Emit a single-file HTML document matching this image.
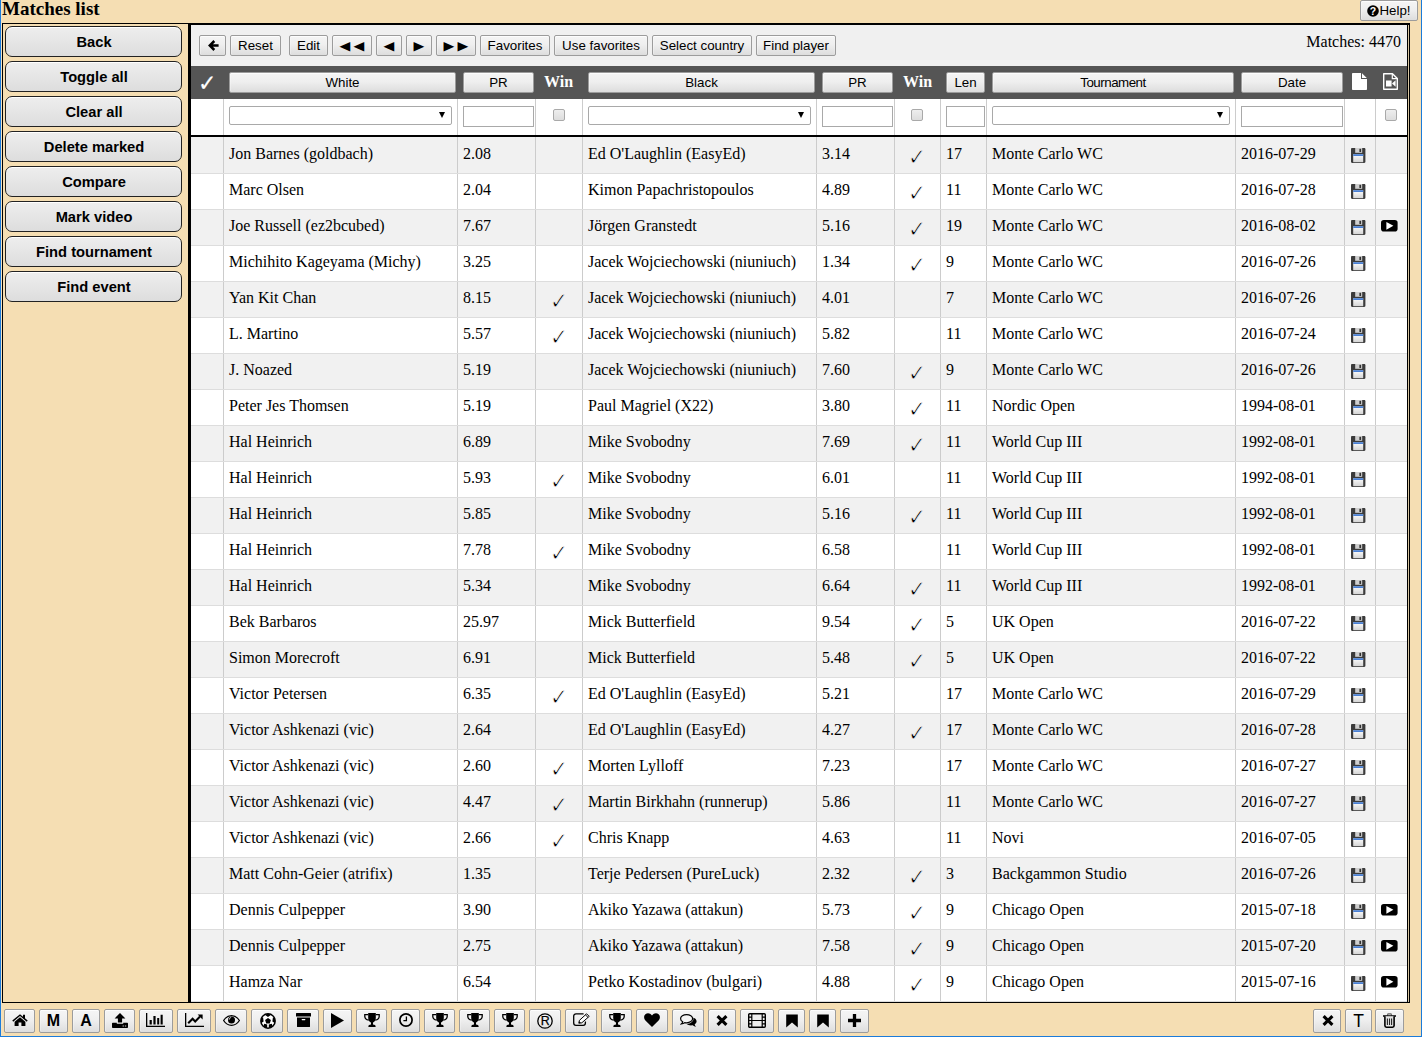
<!DOCTYPE html><html><head><meta charset="utf-8"><title>Matches list</title><style>
html,body{margin:0;padding:0;}
body{width:1422px;height:1037px;overflow:hidden;background:#f5deb3;position:relative;font-family:"Liberation Serif",serif;font-size:16px;color:#000;}
#bl{position:absolute;left:0;top:0;width:1px;height:1037px;background:#1c7bd9;border-right:1px solid #f3e2c2;}
#bb{position:absolute;left:0;top:1036px;width:1422px;height:1px;background:#1c7bd9;}
#br{position:absolute;left:1421px;top:0;width:1px;height:1037px;background:#1c7bd9;}
#title{position:absolute;left:2px;top:-2px;font-weight:bold;font-size:19px;line-height:22px;white-space:nowrap;}
button{font-family:"Liberation Sans",sans-serif;font-size:13.333px;color:#000;margin:0;padding:0;box-sizing:border-box;white-space:nowrap;}
.b{position:absolute;border:1px solid #9c9c9c;border-radius:2px;background:linear-gradient(#f5f5f5,#efefef 45%,#dddddd);box-shadow:inset 0 1px 0 rgba(255,255,255,.8),inset 1px 0 0 rgba(255,255,255,.3),inset -1px 0 0 rgba(255,255,255,.15);text-align:center;}
#help{position:absolute;left:1360px;top:0px;width:58px;height:21px;border:1px solid #9c9c9c;border-radius:2px;background:linear-gradient(#f5f5f5,#efefef 45%,#dddddd);box-shadow:inset 0 1px 0 rgba(255,255,255,.8),inset 1px 0 0 rgba(255,255,255,.3),inset -1px 0 0 rgba(255,255,255,.15);font-size:13.333px;line-height:17px;text-align:center;}
#help svg{width:12px;height:12px;vertical-align:-1.5px;}
#left{position:absolute;left:2px;top:23px;width:185px;height:978px;border:1px solid #000;}
.lb{position:absolute;left:2px;width:177px;height:31px;border:1px solid #222;border-radius:7px;background:linear-gradient(#eeeeee,#dddddd);font-weight:bold;font-size:14.7px;line-height:29px;padding-top:1px;padding-left:1px;box-shadow:inset 0 1px 0 #fff;}
#main{position:absolute;left:189px;top:23px;width:1219px;height:977px;border-left:2px solid #000;border-top:2px solid #000;border-bottom:1px solid #000;background:#fff;overflow:hidden;}
#mr1,#mr2,#mr3{position:absolute;top:0;width:1px;height:977px;background:#000;z-index:5}
#mr1{left:1216px}#mr2{left:1217px;background:#d9c7a3}#mr3{left:1218px}
#tb{position:absolute;left:0;top:0;width:1216px;height:41px;background:#f0f0f0;}
.tbb{top:10px;height:21px;line-height:18px;}
.tri{font-family:"DejaVu Sans",sans-serif;font-size:14px;line-height:17px;}
.tri span{display:inline-block;transform:scaleY(.9);width:14px;text-align:center}
#mc{position:absolute;right:6px;top:7px;line-height:20px;}
#hd{position:absolute;left:0;top:41px;width:1216px;height:33px;background:#555;}
.hb{top:6px;height:21px;line-height:18px;}
.hchk{position:absolute;left:7.3px;top:6.2px;color:#fff;font-family:"DejaVu Sans",sans-serif;font-size:23px;line-height:22px;-webkit-text-stroke:0.15px #fff;transform:scaleX(.96);transform-origin:0 0}
.win{position:absolute;top:6px;color:#fff;font-weight:bold;font-size:16px;line-height:20px;}
.hi{position:absolute;top:7px;line-height:0}
#fr{position:absolute;left:0;top:74px;width:1216px;height:36px;background:#fff;}
#sep{position:absolute;left:0;top:110px;width:1216px;height:2px;background:#000;}
.cell{position:absolute;top:0;height:100%;box-sizing:border-box;border-right:1px solid #ccc;padding:0 0 0 5px;white-space:nowrap;overflow:hidden;}
.c11{border-right:none;}
.row{position:relative;height:35px;border-bottom:1px solid #ddd;line-height:32px;background:#fff;top:112px;}
.row.odd{background:#f1f1f1;}
.row.first{height:36px;}
.row.first .cell{padding-top:1px}
.ctr{text-align:center;padding:0;}
.ck{font-family:"DejaVu Sans",sans-serif;font-size:24px;line-height:20px;position:relative;top:5.5px;display:inline-block;transform:scaleX(.92);-webkit-text-stroke:0.9px #fff;}
.odd .ck{-webkit-text-stroke-color:#f1f1f1;}
.ic{padding:0;text-align:center;}
.ic svg{position:absolute;}
.c10 svg{left:6px;bottom:10px}
.c11 svg{left:5px;bottom:13.4px}
.sel{position:absolute;top:7px;height:19px;box-sizing:border-box;border:1px solid #a9a9a9;background:#fff;border-radius:2px}
.sel i{position:absolute;right:6px;top:5px;width:0;height:0;border-left:3.5px solid transparent;border-right:3.5px solid transparent;border-top:6px solid #000;}
.sel select{-webkit-appearance:none;appearance:none;position:absolute;left:0;top:0;width:100%;height:100%;border:0;margin:0;padding:0;background:transparent;outline:none;font:13.333px "Liberation Sans",sans-serif}
input{-webkit-appearance:none;appearance:none;margin:0;padding:0;outline:none;font:13.333px "Liberation Sans",sans-serif}
.inp{position:absolute;top:7px;height:21px;box-sizing:border-box;border:1px solid #a9a9a9;background:#fff;}
.cb{position:absolute;top:10px;width:12px;height:12px;box-sizing:border-box;border:1px solid #a9a9a9;border-radius:2px;background:linear-gradient(#eee,#ddd);}
#bot{position:absolute;left:0;top:1009px;width:1422px;height:24px;}
.bb{top:0;height:24px;line-height:20px;font-size:17px;}
.bb svg{position:absolute;}
.bb b{font-size:16px;line-height:19px;display:block;position:relative;top:-1px}
.tt{font-size:17.5px;line-height:20px;display:block}

.c0{left:0px;width:33px;}
.c1{left:33px;width:234px;}
.c2{left:267px;width:78px;}
.c3{left:345px;width:47px;}
.c4{left:392px;width:234px;}
.c5{left:626px;width:78px;}
.c6{left:704px;width:46px;}
.c7{left:750px;width:46px;}
.c8{left:796px;width:249px;}
.c9{left:1045px;width:109px;}
.c10{left:1154px;width:31px;}
.c11{left:1185px;width:31px;}
</style></head><body>
<svg width="0" height="0" style="position:absolute"><defs><linearGradient id="lg" x1="0" y1="0" x2="0" y2="1"><stop offset="0" stop-color="#fff"/><stop offset="1" stop-color="#d4d4d4"/></linearGradient></defs></svg>
<div id="bl"></div><div id="bb"></div><div id="br"></div>
<div id="title">Matches list</div>
<button id="help"><svg width="12" height="12" viewBox="0 0 12 12" ><circle cx="6" cy="6" r="5.8" fill="#000"/><text x="6" y="9.8" font-family="Liberation Sans" font-weight="bold" font-size="10.5" fill="#fff" text-anchor="middle">?</text></svg><span>Help!</span></button>
<div id="left">
<button class="lb" style="top:2px">Back</button>
<button class="lb" style="top:37px">Toggle all</button>
<button class="lb" style="top:72px">Clear all</button>
<button class="lb" style="top:107px">Delete marked</button>
<button class="lb" style="top:142px">Compare</button>
<button class="lb" style="top:177px">Mark video</button>
<button class="lb" style="top:212px">Find tournament</button>
<button class="lb" style="top:247px">Find event</button>
</div>
<div id="main"><div id="mr1"></div><div id="mr2"></div><div id="mr3"></div>
<div id="tb">
<button class="b tbb" style="left:8px;width:27px"><svg width="11" height="11" viewBox="0 0 11 11" style="position:absolute;left:7.5px;top:4px"><path d="M10.6 5.5H2.6M6.3 1L1.8 5.5L6.3 10" fill="none" stroke="#000" stroke-width="2.5" stroke-linecap="butt" stroke-linejoin="miter"/></svg></button>
<button class="b tbb" style="left:39px;width:51px">Reset</button>
<button class="b tbb" style="left:98px;width:39px">Edit</button>
<button class="b tbb tri" style="left:141px;width:40px"><span>◀</span><span>◀</span></button>
<button class="b tbb tri" style="left:185px;width:26px"><span>◀</span></button>
<button class="b tbb tri" style="left:215px;width:26px"><span>▶</span></button>
<button class="b tbb tri" style="left:245px;width:40px"><span>▶</span><span>▶</span></button>
<button class="b tbb" style="left:289px;width:70px">Favorites</button>
<button class="b tbb" style="left:363px;width:94px">Use favorites</button>
<button class="b tbb" style="left:461px;width:100px">Select country</button>
<button class="b tbb" style="left:565px;width:80px">Find player</button>
<div id="mc">Matches: 4470</div>
</div>
<div id="hd">
<span class="hchk">✓</span>
<button class="b hb" style="left:38px;width:227px">White</button>
<button class="b hb" style="left:272px;width:71px">PR</button>
<button class="b hb" style="left:397px;width:227px">Black</button>
<button class="b hb" style="left:631px;width:71px">PR</button>
<button class="b hb" style="left:755px;width:39px">Len</button>
<button class="b hb" style="left:801px;width:242px;letter-spacing:-0.5px">Tournament</button>
<button class="b hb" style="left:1050px;width:102px">Date</button>
<span class="win" style="left:353px">Win</span>
<span class="win" style="left:712px">Win</span>
<span class="hi" style="left:1161px"><svg width="15" height="17" viewBox="0 0 15 17" ><path d="M0.8 0H9V6H15V16.2C15 16.7 14.7 17 14.2 17H0.8C0.3 17 0 16.7 0 16.2V0.8C0 0.3 0.3 0 0.8 0Z M10 0.2L14.8 5H10Z" fill="#fff"/></svg></span>
<span class="hi" style="left:1192px"><svg width="15" height="17" viewBox="0 0 15 17" ><path d="M0.7 0.7H9.5L14.3 5.5V16.3H0.7Z" fill="none" stroke="#fff" stroke-width="1.4" stroke-linejoin="round"/><path d="M9.3 0.7V5.7H14.3" fill="none" stroke="#fff" stroke-width="1.2"/><path d="M3 7.5H8.6V13.5H3Z M9 10.5L12.6 7.3V13.7Z" fill="#fff"/></svg></span>
</div>
<div id="fr">
<div class="cell c0"></div>
<div class="cell c1"></div>
<div class="cell c2"></div>
<div class="cell c3"></div>
<div class="cell c4"></div>
<div class="cell c5"></div>
<div class="cell c6"></div>
<div class="cell c7"></div>
<div class="cell c8"></div>
<div class="cell c9"></div>
<div class="cell c10"></div>
<div class="cell c11"></div>
<div class="sel" style="left:38px;width:223px"><select><option></option></select><i></i></div>
<div class="sel" style="left:397px;width:223px"><select><option></option></select><i></i></div>
<div class="sel" style="left:801px;width:238px"><select><option></option></select><i></i></div>
<input type="text" class="inp" style="left:272px;width:71px">
<input type="text" class="inp" style="left:631px;width:71px">
<input type="text" class="inp" style="left:755px;width:39px">
<input type="text" class="inp" style="left:1050px;width:102px">
<input type="checkbox" class="cb" style="left:362px">
<input type="checkbox" class="cb" style="left:720px">
<input type="checkbox" class="cb" style="left:1194px">
</div><div id="sep"></div>
<div class="row odd first">
<div class="cell c0"></div>
<div class="cell c1">Jon Barnes (goldbach)</div>
<div class="cell c2">2.08</div>
<div class="cell c3 ctr"></div>
<div class="cell c4">Ed O'Laughlin (EasyEd)</div>
<div class="cell c5">3.14</div>
<div class="cell c6 ctr"><span class="ck">✓</span></div>
<div class="cell c7">17</div>
<div class="cell c8">Monte Carlo WC</div>
<div class="cell c9">2016-07-29</div>
<div class="cell c10 ic"><svg width="15" height="15" viewBox="0 0 15 15" ><path d="M1.2 0H13.2C13.9 0 14.4 0.5 14.4 1.2V13.8C14.4 14.5 13.9 15 13.2 15H1.2C0.5 15 0 14.5 0 13.8V1.2C0 0.5 0.5 0 1.2 0Z" fill="#3b3b3b"/><rect x="4.2" y="0" width="7" height="4.8" fill="#d0d0d0"/><rect x="8.4" y="0.8" width="1.7" height="3.2" fill="#333"/><rect x="2.2" y="6.2" width="10" height="8" fill="url(#lg)"/><rect x="2.2" y="6.2" width="10" height="1.8" fill="#4a80d4"/></svg></div>
<div class="cell c11 ic"></div>
</div>
<div class="row">
<div class="cell c0"></div>
<div class="cell c1">Marc Olsen</div>
<div class="cell c2">2.04</div>
<div class="cell c3 ctr"></div>
<div class="cell c4">Kimon Papachristopoulos</div>
<div class="cell c5">4.89</div>
<div class="cell c6 ctr"><span class="ck">✓</span></div>
<div class="cell c7">11</div>
<div class="cell c8">Monte Carlo WC</div>
<div class="cell c9">2016-07-28</div>
<div class="cell c10 ic"><svg width="15" height="15" viewBox="0 0 15 15" ><path d="M1.2 0H13.2C13.9 0 14.4 0.5 14.4 1.2V13.8C14.4 14.5 13.9 15 13.2 15H1.2C0.5 15 0 14.5 0 13.8V1.2C0 0.5 0.5 0 1.2 0Z" fill="#3b3b3b"/><rect x="4.2" y="0" width="7" height="4.8" fill="#d0d0d0"/><rect x="8.4" y="0.8" width="1.7" height="3.2" fill="#333"/><rect x="2.2" y="6.2" width="10" height="8" fill="url(#lg)"/><rect x="2.2" y="6.2" width="10" height="1.8" fill="#4a80d4"/></svg></div>
<div class="cell c11 ic"></div>
</div>
<div class="row odd">
<div class="cell c0"></div>
<div class="cell c1">Joe Russell (ez2bcubed)</div>
<div class="cell c2">7.67</div>
<div class="cell c3 ctr"></div>
<div class="cell c4">Jörgen Granstedt</div>
<div class="cell c5">5.16</div>
<div class="cell c6 ctr"><span class="ck">✓</span></div>
<div class="cell c7">19</div>
<div class="cell c8">Monte Carlo WC</div>
<div class="cell c9">2016-08-02</div>
<div class="cell c10 ic"><svg width="15" height="15" viewBox="0 0 15 15" ><path d="M1.2 0H13.2C13.9 0 14.4 0.5 14.4 1.2V13.8C14.4 14.5 13.9 15 13.2 15H1.2C0.5 15 0 14.5 0 13.8V1.2C0 0.5 0.5 0 1.2 0Z" fill="#3b3b3b"/><rect x="4.2" y="0" width="7" height="4.8" fill="#d0d0d0"/><rect x="8.4" y="0.8" width="1.7" height="3.2" fill="#333"/><rect x="2.2" y="6.2" width="10" height="8" fill="url(#lg)"/><rect x="2.2" y="6.2" width="10" height="1.8" fill="#4a80d4"/></svg></div>
<div class="cell c11 ic"><svg width="17" height="12" viewBox="0 0 17 12" ><rect x="0" y="0" width="16.6" height="11.6" rx="2.8" fill="#000"/><path d="M5.4 1.9L12.4 5.8L5.4 9.7Z" fill="#fff"/></svg></div>
</div>
<div class="row">
<div class="cell c0"></div>
<div class="cell c1">Michihito Kageyama (Michy)</div>
<div class="cell c2">3.25</div>
<div class="cell c3 ctr"></div>
<div class="cell c4">Jacek Wojciechowski (niuniuch)</div>
<div class="cell c5">1.34</div>
<div class="cell c6 ctr"><span class="ck">✓</span></div>
<div class="cell c7">9</div>
<div class="cell c8">Monte Carlo WC</div>
<div class="cell c9">2016-07-26</div>
<div class="cell c10 ic"><svg width="15" height="15" viewBox="0 0 15 15" ><path d="M1.2 0H13.2C13.9 0 14.4 0.5 14.4 1.2V13.8C14.4 14.5 13.9 15 13.2 15H1.2C0.5 15 0 14.5 0 13.8V1.2C0 0.5 0.5 0 1.2 0Z" fill="#3b3b3b"/><rect x="4.2" y="0" width="7" height="4.8" fill="#d0d0d0"/><rect x="8.4" y="0.8" width="1.7" height="3.2" fill="#333"/><rect x="2.2" y="6.2" width="10" height="8" fill="url(#lg)"/><rect x="2.2" y="6.2" width="10" height="1.8" fill="#4a80d4"/></svg></div>
<div class="cell c11 ic"></div>
</div>
<div class="row odd">
<div class="cell c0"></div>
<div class="cell c1">Yan Kit Chan</div>
<div class="cell c2">8.15</div>
<div class="cell c3 ctr"><span class="ck">✓</span></div>
<div class="cell c4">Jacek Wojciechowski (niuniuch)</div>
<div class="cell c5">4.01</div>
<div class="cell c6 ctr"></div>
<div class="cell c7">7</div>
<div class="cell c8">Monte Carlo WC</div>
<div class="cell c9">2016-07-26</div>
<div class="cell c10 ic"><svg width="15" height="15" viewBox="0 0 15 15" ><path d="M1.2 0H13.2C13.9 0 14.4 0.5 14.4 1.2V13.8C14.4 14.5 13.9 15 13.2 15H1.2C0.5 15 0 14.5 0 13.8V1.2C0 0.5 0.5 0 1.2 0Z" fill="#3b3b3b"/><rect x="4.2" y="0" width="7" height="4.8" fill="#d0d0d0"/><rect x="8.4" y="0.8" width="1.7" height="3.2" fill="#333"/><rect x="2.2" y="6.2" width="10" height="8" fill="url(#lg)"/><rect x="2.2" y="6.2" width="10" height="1.8" fill="#4a80d4"/></svg></div>
<div class="cell c11 ic"></div>
</div>
<div class="row">
<div class="cell c0"></div>
<div class="cell c1">L. Martino</div>
<div class="cell c2">5.57</div>
<div class="cell c3 ctr"><span class="ck">✓</span></div>
<div class="cell c4">Jacek Wojciechowski (niuniuch)</div>
<div class="cell c5">5.82</div>
<div class="cell c6 ctr"></div>
<div class="cell c7">11</div>
<div class="cell c8">Monte Carlo WC</div>
<div class="cell c9">2016-07-24</div>
<div class="cell c10 ic"><svg width="15" height="15" viewBox="0 0 15 15" ><path d="M1.2 0H13.2C13.9 0 14.4 0.5 14.4 1.2V13.8C14.4 14.5 13.9 15 13.2 15H1.2C0.5 15 0 14.5 0 13.8V1.2C0 0.5 0.5 0 1.2 0Z" fill="#3b3b3b"/><rect x="4.2" y="0" width="7" height="4.8" fill="#d0d0d0"/><rect x="8.4" y="0.8" width="1.7" height="3.2" fill="#333"/><rect x="2.2" y="6.2" width="10" height="8" fill="url(#lg)"/><rect x="2.2" y="6.2" width="10" height="1.8" fill="#4a80d4"/></svg></div>
<div class="cell c11 ic"></div>
</div>
<div class="row odd">
<div class="cell c0"></div>
<div class="cell c1">J. Noazed</div>
<div class="cell c2">5.19</div>
<div class="cell c3 ctr"></div>
<div class="cell c4">Jacek Wojciechowski (niuniuch)</div>
<div class="cell c5">7.60</div>
<div class="cell c6 ctr"><span class="ck">✓</span></div>
<div class="cell c7">9</div>
<div class="cell c8">Monte Carlo WC</div>
<div class="cell c9">2016-07-26</div>
<div class="cell c10 ic"><svg width="15" height="15" viewBox="0 0 15 15" ><path d="M1.2 0H13.2C13.9 0 14.4 0.5 14.4 1.2V13.8C14.4 14.5 13.9 15 13.2 15H1.2C0.5 15 0 14.5 0 13.8V1.2C0 0.5 0.5 0 1.2 0Z" fill="#3b3b3b"/><rect x="4.2" y="0" width="7" height="4.8" fill="#d0d0d0"/><rect x="8.4" y="0.8" width="1.7" height="3.2" fill="#333"/><rect x="2.2" y="6.2" width="10" height="8" fill="url(#lg)"/><rect x="2.2" y="6.2" width="10" height="1.8" fill="#4a80d4"/></svg></div>
<div class="cell c11 ic"></div>
</div>
<div class="row">
<div class="cell c0"></div>
<div class="cell c1">Peter Jes Thomsen</div>
<div class="cell c2">5.19</div>
<div class="cell c3 ctr"></div>
<div class="cell c4">Paul Magriel (X22)</div>
<div class="cell c5">3.80</div>
<div class="cell c6 ctr"><span class="ck">✓</span></div>
<div class="cell c7">11</div>
<div class="cell c8">Nordic Open</div>
<div class="cell c9">1994-08-01</div>
<div class="cell c10 ic"><svg width="15" height="15" viewBox="0 0 15 15" ><path d="M1.2 0H13.2C13.9 0 14.4 0.5 14.4 1.2V13.8C14.4 14.5 13.9 15 13.2 15H1.2C0.5 15 0 14.5 0 13.8V1.2C0 0.5 0.5 0 1.2 0Z" fill="#3b3b3b"/><rect x="4.2" y="0" width="7" height="4.8" fill="#d0d0d0"/><rect x="8.4" y="0.8" width="1.7" height="3.2" fill="#333"/><rect x="2.2" y="6.2" width="10" height="8" fill="url(#lg)"/><rect x="2.2" y="6.2" width="10" height="1.8" fill="#4a80d4"/></svg></div>
<div class="cell c11 ic"></div>
</div>
<div class="row odd">
<div class="cell c0"></div>
<div class="cell c1">Hal Heinrich</div>
<div class="cell c2">6.89</div>
<div class="cell c3 ctr"></div>
<div class="cell c4">Mike Svobodny</div>
<div class="cell c5">7.69</div>
<div class="cell c6 ctr"><span class="ck">✓</span></div>
<div class="cell c7">11</div>
<div class="cell c8">World Cup III</div>
<div class="cell c9">1992-08-01</div>
<div class="cell c10 ic"><svg width="15" height="15" viewBox="0 0 15 15" ><path d="M1.2 0H13.2C13.9 0 14.4 0.5 14.4 1.2V13.8C14.4 14.5 13.9 15 13.2 15H1.2C0.5 15 0 14.5 0 13.8V1.2C0 0.5 0.5 0 1.2 0Z" fill="#3b3b3b"/><rect x="4.2" y="0" width="7" height="4.8" fill="#d0d0d0"/><rect x="8.4" y="0.8" width="1.7" height="3.2" fill="#333"/><rect x="2.2" y="6.2" width="10" height="8" fill="url(#lg)"/><rect x="2.2" y="6.2" width="10" height="1.8" fill="#4a80d4"/></svg></div>
<div class="cell c11 ic"></div>
</div>
<div class="row">
<div class="cell c0"></div>
<div class="cell c1">Hal Heinrich</div>
<div class="cell c2">5.93</div>
<div class="cell c3 ctr"><span class="ck">✓</span></div>
<div class="cell c4">Mike Svobodny</div>
<div class="cell c5">6.01</div>
<div class="cell c6 ctr"></div>
<div class="cell c7">11</div>
<div class="cell c8">World Cup III</div>
<div class="cell c9">1992-08-01</div>
<div class="cell c10 ic"><svg width="15" height="15" viewBox="0 0 15 15" ><path d="M1.2 0H13.2C13.9 0 14.4 0.5 14.4 1.2V13.8C14.4 14.5 13.9 15 13.2 15H1.2C0.5 15 0 14.5 0 13.8V1.2C0 0.5 0.5 0 1.2 0Z" fill="#3b3b3b"/><rect x="4.2" y="0" width="7" height="4.8" fill="#d0d0d0"/><rect x="8.4" y="0.8" width="1.7" height="3.2" fill="#333"/><rect x="2.2" y="6.2" width="10" height="8" fill="url(#lg)"/><rect x="2.2" y="6.2" width="10" height="1.8" fill="#4a80d4"/></svg></div>
<div class="cell c11 ic"></div>
</div>
<div class="row odd">
<div class="cell c0"></div>
<div class="cell c1">Hal Heinrich</div>
<div class="cell c2">5.85</div>
<div class="cell c3 ctr"></div>
<div class="cell c4">Mike Svobodny</div>
<div class="cell c5">5.16</div>
<div class="cell c6 ctr"><span class="ck">✓</span></div>
<div class="cell c7">11</div>
<div class="cell c8">World Cup III</div>
<div class="cell c9">1992-08-01</div>
<div class="cell c10 ic"><svg width="15" height="15" viewBox="0 0 15 15" ><path d="M1.2 0H13.2C13.9 0 14.4 0.5 14.4 1.2V13.8C14.4 14.5 13.9 15 13.2 15H1.2C0.5 15 0 14.5 0 13.8V1.2C0 0.5 0.5 0 1.2 0Z" fill="#3b3b3b"/><rect x="4.2" y="0" width="7" height="4.8" fill="#d0d0d0"/><rect x="8.4" y="0.8" width="1.7" height="3.2" fill="#333"/><rect x="2.2" y="6.2" width="10" height="8" fill="url(#lg)"/><rect x="2.2" y="6.2" width="10" height="1.8" fill="#4a80d4"/></svg></div>
<div class="cell c11 ic"></div>
</div>
<div class="row">
<div class="cell c0"></div>
<div class="cell c1">Hal Heinrich</div>
<div class="cell c2">7.78</div>
<div class="cell c3 ctr"><span class="ck">✓</span></div>
<div class="cell c4">Mike Svobodny</div>
<div class="cell c5">6.58</div>
<div class="cell c6 ctr"></div>
<div class="cell c7">11</div>
<div class="cell c8">World Cup III</div>
<div class="cell c9">1992-08-01</div>
<div class="cell c10 ic"><svg width="15" height="15" viewBox="0 0 15 15" ><path d="M1.2 0H13.2C13.9 0 14.4 0.5 14.4 1.2V13.8C14.4 14.5 13.9 15 13.2 15H1.2C0.5 15 0 14.5 0 13.8V1.2C0 0.5 0.5 0 1.2 0Z" fill="#3b3b3b"/><rect x="4.2" y="0" width="7" height="4.8" fill="#d0d0d0"/><rect x="8.4" y="0.8" width="1.7" height="3.2" fill="#333"/><rect x="2.2" y="6.2" width="10" height="8" fill="url(#lg)"/><rect x="2.2" y="6.2" width="10" height="1.8" fill="#4a80d4"/></svg></div>
<div class="cell c11 ic"></div>
</div>
<div class="row odd">
<div class="cell c0"></div>
<div class="cell c1">Hal Heinrich</div>
<div class="cell c2">5.34</div>
<div class="cell c3 ctr"></div>
<div class="cell c4">Mike Svobodny</div>
<div class="cell c5">6.64</div>
<div class="cell c6 ctr"><span class="ck">✓</span></div>
<div class="cell c7">11</div>
<div class="cell c8">World Cup III</div>
<div class="cell c9">1992-08-01</div>
<div class="cell c10 ic"><svg width="15" height="15" viewBox="0 0 15 15" ><path d="M1.2 0H13.2C13.9 0 14.4 0.5 14.4 1.2V13.8C14.4 14.5 13.9 15 13.2 15H1.2C0.5 15 0 14.5 0 13.8V1.2C0 0.5 0.5 0 1.2 0Z" fill="#3b3b3b"/><rect x="4.2" y="0" width="7" height="4.8" fill="#d0d0d0"/><rect x="8.4" y="0.8" width="1.7" height="3.2" fill="#333"/><rect x="2.2" y="6.2" width="10" height="8" fill="url(#lg)"/><rect x="2.2" y="6.2" width="10" height="1.8" fill="#4a80d4"/></svg></div>
<div class="cell c11 ic"></div>
</div>
<div class="row">
<div class="cell c0"></div>
<div class="cell c1">Bek Barbaros</div>
<div class="cell c2">25.97</div>
<div class="cell c3 ctr"></div>
<div class="cell c4">Mick Butterfield</div>
<div class="cell c5">9.54</div>
<div class="cell c6 ctr"><span class="ck">✓</span></div>
<div class="cell c7">5</div>
<div class="cell c8">UK Open</div>
<div class="cell c9">2016-07-22</div>
<div class="cell c10 ic"><svg width="15" height="15" viewBox="0 0 15 15" ><path d="M1.2 0H13.2C13.9 0 14.4 0.5 14.4 1.2V13.8C14.4 14.5 13.9 15 13.2 15H1.2C0.5 15 0 14.5 0 13.8V1.2C0 0.5 0.5 0 1.2 0Z" fill="#3b3b3b"/><rect x="4.2" y="0" width="7" height="4.8" fill="#d0d0d0"/><rect x="8.4" y="0.8" width="1.7" height="3.2" fill="#333"/><rect x="2.2" y="6.2" width="10" height="8" fill="url(#lg)"/><rect x="2.2" y="6.2" width="10" height="1.8" fill="#4a80d4"/></svg></div>
<div class="cell c11 ic"></div>
</div>
<div class="row odd">
<div class="cell c0"></div>
<div class="cell c1">Simon Morecroft</div>
<div class="cell c2">6.91</div>
<div class="cell c3 ctr"></div>
<div class="cell c4">Mick Butterfield</div>
<div class="cell c5">5.48</div>
<div class="cell c6 ctr"><span class="ck">✓</span></div>
<div class="cell c7">5</div>
<div class="cell c8">UK Open</div>
<div class="cell c9">2016-07-22</div>
<div class="cell c10 ic"><svg width="15" height="15" viewBox="0 0 15 15" ><path d="M1.2 0H13.2C13.9 0 14.4 0.5 14.4 1.2V13.8C14.4 14.5 13.9 15 13.2 15H1.2C0.5 15 0 14.5 0 13.8V1.2C0 0.5 0.5 0 1.2 0Z" fill="#3b3b3b"/><rect x="4.2" y="0" width="7" height="4.8" fill="#d0d0d0"/><rect x="8.4" y="0.8" width="1.7" height="3.2" fill="#333"/><rect x="2.2" y="6.2" width="10" height="8" fill="url(#lg)"/><rect x="2.2" y="6.2" width="10" height="1.8" fill="#4a80d4"/></svg></div>
<div class="cell c11 ic"></div>
</div>
<div class="row">
<div class="cell c0"></div>
<div class="cell c1">Victor Petersen</div>
<div class="cell c2">6.35</div>
<div class="cell c3 ctr"><span class="ck">✓</span></div>
<div class="cell c4">Ed O'Laughlin (EasyEd)</div>
<div class="cell c5">5.21</div>
<div class="cell c6 ctr"></div>
<div class="cell c7">17</div>
<div class="cell c8">Monte Carlo WC</div>
<div class="cell c9">2016-07-29</div>
<div class="cell c10 ic"><svg width="15" height="15" viewBox="0 0 15 15" ><path d="M1.2 0H13.2C13.9 0 14.4 0.5 14.4 1.2V13.8C14.4 14.5 13.9 15 13.2 15H1.2C0.5 15 0 14.5 0 13.8V1.2C0 0.5 0.5 0 1.2 0Z" fill="#3b3b3b"/><rect x="4.2" y="0" width="7" height="4.8" fill="#d0d0d0"/><rect x="8.4" y="0.8" width="1.7" height="3.2" fill="#333"/><rect x="2.2" y="6.2" width="10" height="8" fill="url(#lg)"/><rect x="2.2" y="6.2" width="10" height="1.8" fill="#4a80d4"/></svg></div>
<div class="cell c11 ic"></div>
</div>
<div class="row odd">
<div class="cell c0"></div>
<div class="cell c1">Victor Ashkenazi (vic)</div>
<div class="cell c2">2.64</div>
<div class="cell c3 ctr"></div>
<div class="cell c4">Ed O'Laughlin (EasyEd)</div>
<div class="cell c5">4.27</div>
<div class="cell c6 ctr"><span class="ck">✓</span></div>
<div class="cell c7">17</div>
<div class="cell c8">Monte Carlo WC</div>
<div class="cell c9">2016-07-28</div>
<div class="cell c10 ic"><svg width="15" height="15" viewBox="0 0 15 15" ><path d="M1.2 0H13.2C13.9 0 14.4 0.5 14.4 1.2V13.8C14.4 14.5 13.9 15 13.2 15H1.2C0.5 15 0 14.5 0 13.8V1.2C0 0.5 0.5 0 1.2 0Z" fill="#3b3b3b"/><rect x="4.2" y="0" width="7" height="4.8" fill="#d0d0d0"/><rect x="8.4" y="0.8" width="1.7" height="3.2" fill="#333"/><rect x="2.2" y="6.2" width="10" height="8" fill="url(#lg)"/><rect x="2.2" y="6.2" width="10" height="1.8" fill="#4a80d4"/></svg></div>
<div class="cell c11 ic"></div>
</div>
<div class="row">
<div class="cell c0"></div>
<div class="cell c1">Victor Ashkenazi (vic)</div>
<div class="cell c2">2.60</div>
<div class="cell c3 ctr"><span class="ck">✓</span></div>
<div class="cell c4">Morten Lylloff</div>
<div class="cell c5">7.23</div>
<div class="cell c6 ctr"></div>
<div class="cell c7">17</div>
<div class="cell c8">Monte Carlo WC</div>
<div class="cell c9">2016-07-27</div>
<div class="cell c10 ic"><svg width="15" height="15" viewBox="0 0 15 15" ><path d="M1.2 0H13.2C13.9 0 14.4 0.5 14.4 1.2V13.8C14.4 14.5 13.9 15 13.2 15H1.2C0.5 15 0 14.5 0 13.8V1.2C0 0.5 0.5 0 1.2 0Z" fill="#3b3b3b"/><rect x="4.2" y="0" width="7" height="4.8" fill="#d0d0d0"/><rect x="8.4" y="0.8" width="1.7" height="3.2" fill="#333"/><rect x="2.2" y="6.2" width="10" height="8" fill="url(#lg)"/><rect x="2.2" y="6.2" width="10" height="1.8" fill="#4a80d4"/></svg></div>
<div class="cell c11 ic"></div>
</div>
<div class="row odd">
<div class="cell c0"></div>
<div class="cell c1">Victor Ashkenazi (vic)</div>
<div class="cell c2">4.47</div>
<div class="cell c3 ctr"><span class="ck">✓</span></div>
<div class="cell c4">Martin Birkhahn (runnerup)</div>
<div class="cell c5">5.86</div>
<div class="cell c6 ctr"></div>
<div class="cell c7">11</div>
<div class="cell c8">Monte Carlo WC</div>
<div class="cell c9">2016-07-27</div>
<div class="cell c10 ic"><svg width="15" height="15" viewBox="0 0 15 15" ><path d="M1.2 0H13.2C13.9 0 14.4 0.5 14.4 1.2V13.8C14.4 14.5 13.9 15 13.2 15H1.2C0.5 15 0 14.5 0 13.8V1.2C0 0.5 0.5 0 1.2 0Z" fill="#3b3b3b"/><rect x="4.2" y="0" width="7" height="4.8" fill="#d0d0d0"/><rect x="8.4" y="0.8" width="1.7" height="3.2" fill="#333"/><rect x="2.2" y="6.2" width="10" height="8" fill="url(#lg)"/><rect x="2.2" y="6.2" width="10" height="1.8" fill="#4a80d4"/></svg></div>
<div class="cell c11 ic"></div>
</div>
<div class="row">
<div class="cell c0"></div>
<div class="cell c1">Victor Ashkenazi (vic)</div>
<div class="cell c2">2.66</div>
<div class="cell c3 ctr"><span class="ck">✓</span></div>
<div class="cell c4">Chris Knapp</div>
<div class="cell c5">4.63</div>
<div class="cell c6 ctr"></div>
<div class="cell c7">11</div>
<div class="cell c8">Novi</div>
<div class="cell c9">2016-07-05</div>
<div class="cell c10 ic"><svg width="15" height="15" viewBox="0 0 15 15" ><path d="M1.2 0H13.2C13.9 0 14.4 0.5 14.4 1.2V13.8C14.4 14.5 13.9 15 13.2 15H1.2C0.5 15 0 14.5 0 13.8V1.2C0 0.5 0.5 0 1.2 0Z" fill="#3b3b3b"/><rect x="4.2" y="0" width="7" height="4.8" fill="#d0d0d0"/><rect x="8.4" y="0.8" width="1.7" height="3.2" fill="#333"/><rect x="2.2" y="6.2" width="10" height="8" fill="url(#lg)"/><rect x="2.2" y="6.2" width="10" height="1.8" fill="#4a80d4"/></svg></div>
<div class="cell c11 ic"></div>
</div>
<div class="row odd">
<div class="cell c0"></div>
<div class="cell c1">Matt Cohn-Geier (atrifix)</div>
<div class="cell c2">1.35</div>
<div class="cell c3 ctr"></div>
<div class="cell c4">Terje Pedersen (PureLuck)</div>
<div class="cell c5">2.32</div>
<div class="cell c6 ctr"><span class="ck">✓</span></div>
<div class="cell c7">3</div>
<div class="cell c8">Backgammon Studio</div>
<div class="cell c9">2016-07-26</div>
<div class="cell c10 ic"><svg width="15" height="15" viewBox="0 0 15 15" ><path d="M1.2 0H13.2C13.9 0 14.4 0.5 14.4 1.2V13.8C14.4 14.5 13.9 15 13.2 15H1.2C0.5 15 0 14.5 0 13.8V1.2C0 0.5 0.5 0 1.2 0Z" fill="#3b3b3b"/><rect x="4.2" y="0" width="7" height="4.8" fill="#d0d0d0"/><rect x="8.4" y="0.8" width="1.7" height="3.2" fill="#333"/><rect x="2.2" y="6.2" width="10" height="8" fill="url(#lg)"/><rect x="2.2" y="6.2" width="10" height="1.8" fill="#4a80d4"/></svg></div>
<div class="cell c11 ic"></div>
</div>
<div class="row">
<div class="cell c0"></div>
<div class="cell c1">Dennis Culpepper</div>
<div class="cell c2">3.90</div>
<div class="cell c3 ctr"></div>
<div class="cell c4">Akiko Yazawa (attakun)</div>
<div class="cell c5">5.73</div>
<div class="cell c6 ctr"><span class="ck">✓</span></div>
<div class="cell c7">9</div>
<div class="cell c8">Chicago Open</div>
<div class="cell c9">2015-07-18</div>
<div class="cell c10 ic"><svg width="15" height="15" viewBox="0 0 15 15" ><path d="M1.2 0H13.2C13.9 0 14.4 0.5 14.4 1.2V13.8C14.4 14.5 13.9 15 13.2 15H1.2C0.5 15 0 14.5 0 13.8V1.2C0 0.5 0.5 0 1.2 0Z" fill="#3b3b3b"/><rect x="4.2" y="0" width="7" height="4.8" fill="#d0d0d0"/><rect x="8.4" y="0.8" width="1.7" height="3.2" fill="#333"/><rect x="2.2" y="6.2" width="10" height="8" fill="url(#lg)"/><rect x="2.2" y="6.2" width="10" height="1.8" fill="#4a80d4"/></svg></div>
<div class="cell c11 ic"><svg width="17" height="12" viewBox="0 0 17 12" ><rect x="0" y="0" width="16.6" height="11.6" rx="2.8" fill="#000"/><path d="M5.4 1.9L12.4 5.8L5.4 9.7Z" fill="#fff"/></svg></div>
</div>
<div class="row odd">
<div class="cell c0"></div>
<div class="cell c1">Dennis Culpepper</div>
<div class="cell c2">2.75</div>
<div class="cell c3 ctr"></div>
<div class="cell c4">Akiko Yazawa (attakun)</div>
<div class="cell c5">7.58</div>
<div class="cell c6 ctr"><span class="ck">✓</span></div>
<div class="cell c7">9</div>
<div class="cell c8">Chicago Open</div>
<div class="cell c9">2015-07-20</div>
<div class="cell c10 ic"><svg width="15" height="15" viewBox="0 0 15 15" ><path d="M1.2 0H13.2C13.9 0 14.4 0.5 14.4 1.2V13.8C14.4 14.5 13.9 15 13.2 15H1.2C0.5 15 0 14.5 0 13.8V1.2C0 0.5 0.5 0 1.2 0Z" fill="#3b3b3b"/><rect x="4.2" y="0" width="7" height="4.8" fill="#d0d0d0"/><rect x="8.4" y="0.8" width="1.7" height="3.2" fill="#333"/><rect x="2.2" y="6.2" width="10" height="8" fill="url(#lg)"/><rect x="2.2" y="6.2" width="10" height="1.8" fill="#4a80d4"/></svg></div>
<div class="cell c11 ic"><svg width="17" height="12" viewBox="0 0 17 12" ><rect x="0" y="0" width="16.6" height="11.6" rx="2.8" fill="#000"/><path d="M5.4 1.9L12.4 5.8L5.4 9.7Z" fill="#fff"/></svg></div>
</div>
<div class="row">
<div class="cell c0"></div>
<div class="cell c1">Hamza Nar</div>
<div class="cell c2">6.54</div>
<div class="cell c3 ctr"></div>
<div class="cell c4">Petko Kostadinov (bulgari)</div>
<div class="cell c5">4.88</div>
<div class="cell c6 ctr"><span class="ck">✓</span></div>
<div class="cell c7">9</div>
<div class="cell c8">Chicago Open</div>
<div class="cell c9">2015-07-16</div>
<div class="cell c10 ic"><svg width="15" height="15" viewBox="0 0 15 15" ><path d="M1.2 0H13.2C13.9 0 14.4 0.5 14.4 1.2V13.8C14.4 14.5 13.9 15 13.2 15H1.2C0.5 15 0 14.5 0 13.8V1.2C0 0.5 0.5 0 1.2 0Z" fill="#3b3b3b"/><rect x="4.2" y="0" width="7" height="4.8" fill="#d0d0d0"/><rect x="8.4" y="0.8" width="1.7" height="3.2" fill="#333"/><rect x="2.2" y="6.2" width="10" height="8" fill="url(#lg)"/><rect x="2.2" y="6.2" width="10" height="1.8" fill="#4a80d4"/></svg></div>
<div class="cell c11 ic"><svg width="17" height="12" viewBox="0 0 17 12" ><rect x="0" y="0" width="16.6" height="11.6" rx="2.8" fill="#000"/><path d="M5.4 1.9L12.4 5.8L5.4 9.7Z" fill="#fff"/></svg></div>
</div>
</div>
<div id="bot">
<button class="b bb" style="left:4px;width:31px"><svg style="left:7px;top:4px" width="16" height="12" viewBox="0 0 16 12" ><path d="M8 0.2L0.3 6.6L1.2 7.7L8 2L14.8 7.7L15.7 6.6L13 4.3V0.8H11V2.7Z M8 3.2L2.6 7.7V12H6.6V8.5H9.4V12H13.4V7.7Z" fill="#000"/></svg></button>
<button class="b bb" style="left:39px;width:29px"><b>M</b></button>
<button class="b bb" style="left:72px;width:28px"><b>A</b></button>
<button class="b bb" style="left:104px;width:31px"><svg style="left:7px;top:3px" width="16" height="15" viewBox="0 0 16 15" ><path d="M8 0L2.6 5.4H5.9V9.6H10.1V5.4H13.4Z M0.8 9.8H4.8V10.8H11.2V9.8H15.2C15.7 9.8 16 10.1 16 10.6V14.2C16 14.7 15.7 15 15.2 15H0.8C0.3 15 0 14.7 0 14.2V10.6C0 10.1 0.3 9.8 0.8 9.8Z" fill="#000"/><rect x="10.6" y="12.4" width="1.3" height="1.2" fill="#aaa"/><rect x="12.9" y="12.4" width="1.3" height="1.2" fill="#aaa"/></svg></button>
<button class="b bb" style="left:139px;width:34px"><svg style="left:6px;top:3px" width="19" height="14" viewBox="0 0 19 14" ><path d="M0 0H1.3V12.7H19V14H0Z M3.6 7H5.8V11.6H3.6Z M7.4 3H9.6V11.6H7.4Z M11.2 5H13.2V11.6H11.2Z M14.6 1.7H16.7V11.6H14.6Z" fill="#000"/></svg></button>
<button class="b bb" style="left:177px;width:34px"><svg style="left:7px;top:3px" width="19" height="14" viewBox="0 0 19 14" ><path d="M0 0H1.3V12.7H19V14H0Z" fill="#000"/><path d="M3.2 10.2L7.6 5.8L10.2 8.4L15 3.6" fill="none" stroke="#000" stroke-width="2.1"/><path d="M12.6 1.4H17.6V6.4Z" fill="#000"/></svg></button>
<button class="b bb" style="left:215px;width:32px"><svg style="left:7px;top:5px" width="17" height="11" viewBox="0 0 17 11" ><path d="M0.6 5.5C3 1.8 5.8 0.7 8.5 0.7S14 1.8 16.4 5.5C14 9.2 11.2 10.3 8.5 10.3S3 9.2 0.6 5.5Z" fill="none" stroke="#000" stroke-width="1.3"/><circle cx="8.5" cy="5" r="3.5" fill="#000"/><path d="M6.2 4.6C6.3 3.4 7 2.7 8.1 2.6" fill="none" stroke="#fff" stroke-width="0.9"/></svg></button>
<button class="b bb" style="left:251px;width:32px"><svg style="left:7.5px;top:2.5px" width="16" height="16" viewBox="0 0 16 16" ><circle cx="8" cy="8" r="7.2" fill="#fff" stroke="#000" stroke-width="1.4"/><path d="M8 5L10.9 7.1L9.8 10.5H6.2L5.1 7.1Z M8 0.8L11.2 1.8L8 4L4.8 1.8Z M15.2 5.6L15 10.2L12.4 8.4L12.9 4.6Z M0.8 5.6L3.1 4.6L3.6 8.4L1 10.2Z M3.2 13.6L4.2 10.8L7.2 11.6L7.2 15.2Z M12.8 13.6L8.8 15.2L8.8 11.6L11.8 10.8Z" fill="#000"/></svg></button>
<button class="b bb" style="left:287px;width:32px"><svg style="left:8px;top:3px" width="15" height="14" viewBox="0 0 15 14" ><path d="M0 0.6C0 0.2 0.2 0 0.6 0H14.4C14.8 0 15 0.2 15 0.6V3.6H0Z M1 4.5H14V13.4C14 13.8 13.8 14 13.4 14H1.6C1.2 14 1 13.8 1 13.4Z" fill="#000"/><rect x="5.6" y="6" width="3.8" height="1.2" rx="0.6" fill="#fff"/></svg></button>
<button class="b bb" style="left:323px;width:29px"><svg style="left:7px;top:3px" width="13" height="15" viewBox="0 0 13 15" ><path d="M0 0L13 7.5L0 15Z" fill="#000"/></svg></button>
<button class="b bb" style="left:356px;width:31px"><svg style="left:6.5px;top:3px" width="16" height="14" viewBox="0 0 16 14" ><path d="M4.2 0H11.8V5C11.8 7.6 10.3 9 9 9.4V11.4C10.5 11.5 11.6 12 11.6 13.2V14H4.4V13.2C4.4 12 5.5 11.5 7 11.4V9.4C5.7 9 4.2 7.6 4.2 5Z" fill="#000"/><path d="M4.2 1.7H0.8V3.3C0.8 5.4 2.6 6.9 4.8 7.2 M11.8 1.7H15.2V3.3C15.2 5.4 13.4 6.9 11.2 7.2" fill="none" stroke="#000" stroke-width="1.3"/></svg></button>
<button class="b bb" style="left:391px;width:29px"><svg style="left:7px;top:3px" width="14" height="14" viewBox="0 0 14 14" ><circle cx="7" cy="7" r="6.1" fill="none" stroke="#000" stroke-width="1.7"/><path d="M7.4 3.4V7.7H4.4" fill="none" stroke="#000" stroke-width="1.3"/></svg></button>
<button class="b bb" style="left:424px;width:31px"><svg style="left:6.5px;top:3px" width="16" height="14" viewBox="0 0 16 14" ><path d="M4.2 0H11.8V5C11.8 7.6 10.3 9 9 9.4V11.4C10.5 11.5 11.6 12 11.6 13.2V14H4.4V13.2C4.4 12 5.5 11.5 7 11.4V9.4C5.7 9 4.2 7.6 4.2 5Z" fill="#000"/><path d="M4.2 1.7H0.8V3.3C0.8 5.4 2.6 6.9 4.8 7.2 M11.8 1.7H15.2V3.3C15.2 5.4 13.4 6.9 11.2 7.2" fill="none" stroke="#000" stroke-width="1.3"/></svg></button>
<button class="b bb" style="left:459px;width:31px"><svg style="left:6.5px;top:3px" width="16" height="14" viewBox="0 0 16 14" ><path d="M4.2 0H11.8V5C11.8 7.6 10.3 9 9 9.4V11.4C10.5 11.5 11.6 12 11.6 13.2V14H4.4V13.2C4.4 12 5.5 11.5 7 11.4V9.4C5.7 9 4.2 7.6 4.2 5Z" fill="#000"/><path d="M4.2 1.7H0.8V3.3C0.8 5.4 2.6 6.9 4.8 7.2 M11.8 1.7H15.2V3.3C15.2 5.4 13.4 6.9 11.2 7.2" fill="none" stroke="#000" stroke-width="1.3"/></svg></button>
<button class="b bb" style="left:494px;width:31px"><svg style="left:6.5px;top:3px" width="16" height="14" viewBox="0 0 16 14" ><path d="M4.2 0H11.8V5C11.8 7.6 10.3 9 9 9.4V11.4C10.5 11.5 11.6 12 11.6 13.2V14H4.4V13.2C4.4 12 5.5 11.5 7 11.4V9.4C5.7 9 4.2 7.6 4.2 5Z" fill="#000"/><path d="M4.2 1.7H0.8V3.3C0.8 5.4 2.6 6.9 4.8 7.2 M11.8 1.7H15.2V3.3C15.2 5.4 13.4 6.9 11.2 7.2" fill="none" stroke="#000" stroke-width="1.3"/></svg></button>
<button class="b bb" style="left:529px;width:32px"><svg style="left:7px;top:2.5px" width="16" height="16" viewBox="0 0 16 16" ><circle cx="8" cy="8" r="7.2" fill="none" stroke="#000" stroke-width="1.3"/><text x="8.2" y="12.4" font-family="Liberation Sans" font-size="12.4" text-anchor="middle" fill="#000" stroke="#000" stroke-width="0.25">R</text></svg></button>
<button class="b bb" style="left:565px;width:32px"><svg style="left:7px;top:3px" width="17" height="13" viewBox="0 0 17 13" ><path d="M10.6 0.9H3C1.7 0.9 0.7 1.8 0.7 3.1V10.1C0.7 11.4 1.7 12.3 3 12.3H10.2C11.5 12.3 12.4 11.4 12.4 10.1V8.6" fill="none" stroke="#000" stroke-width="1.3"/><path d="M5.8 10.2L6.4 7.4L13.6 0.8L16.2 3.4L8.8 9.8Z" fill="#fff" stroke="#000" stroke-width="1"/><path d="M5.8 10.2L6.3 8.2L7.9 9.7Z" fill="#000"/><path d="M12.4 1.8L15 4.4" stroke="#000" stroke-width="1" fill="none"/></svg></button>
<button class="b bb" style="left:601px;width:31px"><svg style="left:6.5px;top:3px" width="16" height="14" viewBox="0 0 16 14" ><path d="M4.2 0H11.8V5C11.8 7.6 10.3 9 9 9.4V11.4C10.5 11.5 11.6 12 11.6 13.2V14H4.4V13.2C4.4 12 5.5 11.5 7 11.4V9.4C5.7 9 4.2 7.6 4.2 5Z" fill="#000"/><path d="M4.2 1.7H0.8V3.3C0.8 5.4 2.6 6.9 4.8 7.2 M11.8 1.7H15.2V3.3C15.2 5.4 13.4 6.9 11.2 7.2" fill="none" stroke="#000" stroke-width="1.3"/></svg></button>
<button class="b bb" style="left:636px;width:32px"><svg style="left:7px;top:3px" width="16" height="14" viewBox="0 0 16 14" ><path d="M8 14L1.4 7.6C-0.4 5.6 -0.3 2.8 1.4 1.3C3.3 -0.3 6.1 0 8 2.5C9.9 0 12.7 -0.3 14.6 1.3C16.3 2.8 16.4 5.6 14.6 7.6Z" fill="#000"/></svg></button>
<button class="b bb" style="left:672px;width:32px"><svg style="left:7px;top:4px" width="17" height="13" viewBox="0 0 17 13" ><path d="M12.2 3.6C15 4 16.6 5.6 16.6 7.3C16.6 8.6 15.8 9.7 14.6 10.4C14.9 11.2 15.4 11.9 16.2 12.6C14.8 12.6 13.6 12.1 12.7 11.3C12.2 11.4 11.6 11.4 11.1 11.4C9.2 11.4 7.6 10.9 6.6 10C10.6 9.6 13.4 7.6 13.4 5C13.4 4.5 13.3 4.1 13.1 3.7Z" fill="#000"/><path d="M6.6 0.6C3.3 0.6 0.6 2.4 0.6 4.7C0.6 5.9 1.4 7 2.7 7.8C2.5 8.6 2 9.3 1.3 10C2.7 9.9 3.9 9.4 4.8 8.6C5.4 8.7 6 8.8 6.6 8.8C9.9 8.8 12.6 7 12.6 4.7C12.6 2.4 9.9 0.6 6.6 0.6Z" fill="#f4f4f4" stroke="#000" stroke-width="1.2"/></svg></button>
<button class="b bb" style="left:708px;width:28px"><svg style="left:6.5px;top:5px" width="12" height="11" viewBox="0 0 12 11" ><path d="M1.6 1.1L10.4 9.9M10.4 1.1L1.6 9.9" stroke="#000" stroke-width="3.1" fill="none"/></svg></button>
<button class="b bb" style="left:740px;width:34px"><svg style="left:7px;top:3px" width="18" height="15" viewBox="0 0 18 15" ><rect x="0.7" y="0.7" width="16.6" height="13.6" rx="1" fill="#eee" stroke="#000" stroke-width="1.4"/><path d="M3.8 0V15M14.2 0V15M3.8 7.5H14.2M0 4.1H3.8M0 7.5H3.8M0 10.9H3.8M14.2 4.1H18M14.2 7.5H18M14.2 10.9H18" stroke="#000" stroke-width="1.2" fill="none"/></svg></button>
<button class="b bb" style="left:778px;width:27px"><svg style="left:6.5px;top:3.5px" width="12" height="14" viewBox="0 0 12 14" ><path d="M0.2 0.4H11.8V13.6L6 8.4L0.2 13.6Z" fill="#000"/></svg></button>
<button class="b bb" style="left:809px;width:27px"><svg style="left:6.5px;top:3.5px" width="12" height="14" viewBox="0 0 12 14" ><path d="M0.2 0.4H11.8V13.6L6 8.4L0.2 13.6Z" fill="#000"/></svg></button>
<button class="b bb" style="left:840px;width:29px"><svg style="left:7px;top:3.5px" width="13" height="13" viewBox="0 0 13 13" ><path d="M6.5 0V13M0 6.5H13" stroke="#000" stroke-width="3.3" fill="none"/></svg></button>
<button class="b bb" style="left:1313px;width:28px"><svg style="left:7.5px;top:5px" width="12" height="11" viewBox="0 0 12 11" ><path d="M1.6 1.1L10.4 9.9M10.4 1.1L1.6 9.9" stroke="#000" stroke-width="3.1" fill="none"/></svg></button>
<button class="b bb" style="left:1345px;width:27px"><span class="tt">T</span></button>
<button class="b bb" style="left:1375px;width:29px"><svg style="left:7px;top:2.5px" width="13" height="15" viewBox="0 0 13 15" ><path d="M4.3 2.6L5 0.8H8L8.7 2.6" fill="none" stroke="#666" stroke-width="1.2"/><path d="M0 3H13" stroke="#000" stroke-width="1.5"/><path d="M1.9 3.2V12.6C1.9 13.6 2.5 14.2 3.4 14.2H9.6C10.5 14.2 11.1 13.6 11.1 12.6V3.2" fill="#e4e4e4" stroke="#000" stroke-width="1.6"/><path d="M4.4 5.4V12M6.5 5.4V12M8.6 5.4V12" stroke="#222" stroke-width="1.1"/></svg></button>
</div>
</body></html>
